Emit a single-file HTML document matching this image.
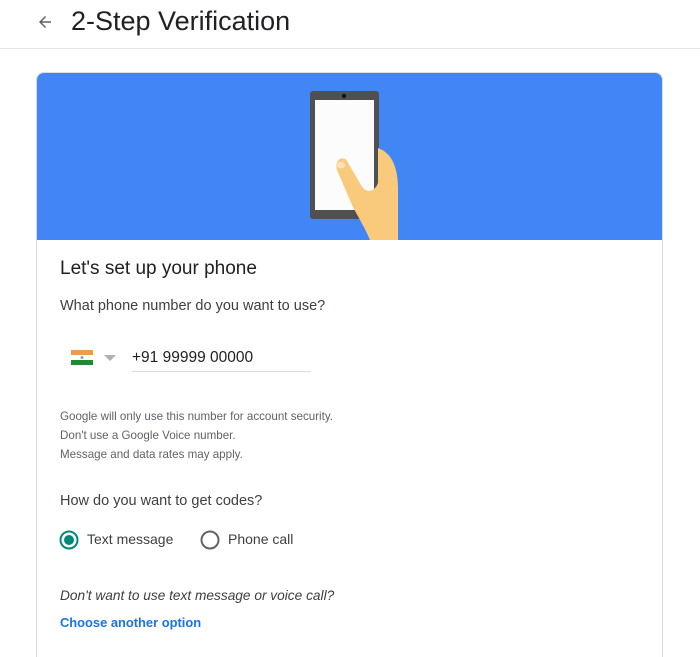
<!DOCTYPE html>
<html><head><meta charset="utf-8"><style>
*{margin:0;padding:0;box-sizing:border-box}
html,body{width:700px;height:657px;overflow:hidden}
body{background:#fff;font-family:"Liberation Sans",Roboto,Arial,sans-serif;color:#202124;position:relative}
.hdr{position:absolute;left:0;top:0;width:700px;height:49px;border-bottom:1px solid #e3e3e3}
.arrow{position:absolute;left:36px;top:13px}
.title{position:absolute;left:71px;top:6px;font-size:27px;color:#202124}
.card{position:absolute;left:36px;top:72px;width:627px;height:585px;border:1px solid #dadce0;border-bottom:none;border-radius:8px 8px 0 0;overflow:hidden}
.banner{position:absolute;left:0;top:0;width:100%;height:167px;background:#4285f4}
.t{position:absolute;white-space:nowrap}
</style></head><body>
<div class="hdr">
<svg class="arrow" width="18" height="18" viewBox="0 0 24 24"><path d="M20 11H7.830l5.59-5.59L12 4l-8 8 8 8 1.41-1.41L7.83 13H20z" fill="#5f6368"/></svg>
<div class="title">2-Step Verification</div>
</div>
<div class="card">
<div class="banner">
<svg width="627" height="167" style="position:absolute;left:0;top:0">
<rect x="273" y="18" width="69" height="128" rx="3" fill="#505050"/>
<rect x="278" y="27" width="59" height="110" fill="#fcfcfc"/>
<circle cx="307" cy="23" r="2" fill="#111"/>
<path d="M341 75 C355 80 361 95 361 115 L361 167 L333 167 C326 150 318 140 312 125 L300 97 C297 87 306 82 310 88 L324 112 C330 122 338 118 341 110 Z" fill="#f9c97c"/>
<ellipse cx="304" cy="92" rx="4" ry="3.5" fill="#fde3b5"/>
</svg>
</div>
<div class="t" style="left:23px;top:185px;font-size:19px;color:#202124">Let's set up your phone</div>
<div class="t" style="left:23px;top:225px;font-size:14.5px;color:#3c4043">What phone number do you want to use?</div>
<svg style="position:absolute;left:34px;top:277px" width="22" height="15"><rect width="22" height="5" fill="#f29a48"/><rect y="5" width="22" height="5" fill="#fff"/><rect y="10" width="22" height="5" fill="#1f8a34"/><circle cx="11" cy="7.5" r="1.5" fill="#8aa0c8"/></svg>
<svg style="position:absolute;left:67px;top:282px" width="12" height="7"><path d="M0 0h12L6 6z" fill="#b0b0b0"/></svg>
<div class="t" style="left:95px;top:276px;font-size:15.5px">+91 99999 00000</div>
<div style="position:absolute;left:95px;top:298px;width:179px;height:1px;background:#dadce0"></div>
<div class="t" style="left:23px;top:334px;font-size:11.6px;color:#5f6368;line-height:19px">Google will only use this number for account security.<br>Don't use a Google Voice number.<br>Message and data rates may apply.</div>
<div class="t" style="left:23px;top:420px;font-size:14.5px;color:#3c4043">How do you want to get codes?</div>
<svg style="position:absolute;left:22px;top:457px" width="20" height="20"><circle cx="10" cy="10" r="8.5" fill="none" stroke="#00897b" stroke-width="2"/><circle cx="10" cy="10" r="5" fill="#00897b"/></svg>
<div class="t" style="left:50px;top:458px;font-size:14px;color:#3c4043">Text message</div>
<svg style="position:absolute;left:163px;top:457px" width="20" height="20"><circle cx="10" cy="10" r="8.5" fill="none" stroke="#5f6368" stroke-width="2"/></svg>
<div class="t" style="left:191px;top:458px;font-size:14px;color:#3c4043">Phone call</div>
<div class="t" style="left:23px;top:515px;font-size:13.7px;font-style:italic;color:#3c4043">Don't want to use text message or voice call?</div>
<div class="t" style="left:23px;top:542px;font-size:12.9px;font-weight:bold;color:#1a73e8">Choose another option</div>
</div>
</body></html>
